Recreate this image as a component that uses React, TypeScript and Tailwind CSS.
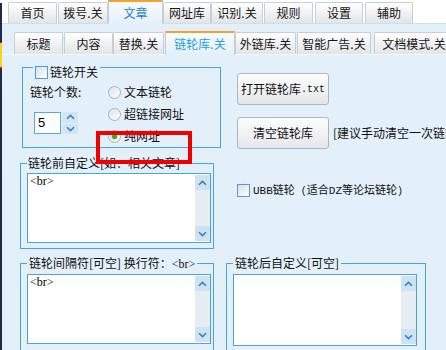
import React from "react";

const SANS = "font-['Noto_Sans_CJK_SC','Liberation_Sans',sans-serif]";
const SERIF = "font-['Liberation_Serif','Noto_Sans_CJK_SC',serif]";
const MONO = "font-['Liberation_Mono',monospace] text-[10px]";
const MONO11 = "font-['Liberation_Mono',monospace] text-[11px]";

function Chevron({ down = false }: { down?: boolean }) {
  return (
    <svg width="9" height="6" viewBox="0 0 9 6">
      <polyline
        points={down ? "1,1.2 4.5,4.6 8,1.2" : "1,4.8 4.5,1.4 8,4.8"}
        fill="none"
        stroke="#2b84d0"
        strokeWidth="1.6"
      />
    </svg>
  );
}

function TextBox({ text, w, h }: { text?: string; w: string; h: string }) {
  return (
    <div className={`flex ${w} ${h} border border-[#4aa3dc] bg-white`}>
      <div className={`flex-1 pl-[2px] text-[12px] leading-[14px] text-black ${SERIF}`}>{text}</div>
      <div className="w-[15px] my-[1px] flex flex-col bg-[#e6eef4]">
        <div className="h-[15px] bg-[#cfe2ef] flex items-center justify-center">
          <Chevron />
        </div>
        <div className="flex-1" />
        <div className="h-[15px] bg-[#cfe2ef] flex items-center justify-center">
          <Chevron down />
        </div>
      </div>
    </div>
  );
}

function Radio({ on = false }: { on?: boolean }) {
  return (
    <span className="w-[13px] h-[13px] shrink-0 rounded-full border border-[#9cb4c6] bg-linear-to-br from-[#dbe3ea] to-[#ffffff] flex items-center justify-center">
      {on && <span className="w-[5px] h-[5px] rounded-full bg-[#38a820] shadow-[0_0_2px_#6fd050]" />}
    </span>
  );
}

function Check() {
  return <span className="w-[13px] h-[13px] shrink-0 border border-[#4a9de0] bg-linear-to-br from-[#d9dfe5] to-[#ffffff]" />;
}

type Tab = { t: string; c: string; active?: boolean };

const topTabs: Tab[] = [
  { t: "首页", c: "ml-[6px] w-[49px]" },
  { t: "拨号.关", c: "ml-[1px] w-[50px]" },
  { t: "文章", c: "w-[55px]", active: true },
  { t: "网址库", c: "w-[48px]" },
  { t: "识别.关", c: "w-[52px]" },
  { t: "规则", c: "ml-[1px] w-[49px]" },
  { t: "设置", c: "ml-[2px] w-[48px]" },
  { t: "辅助", c: "ml-[2px] w-[48px]" },
];

const subTabs: Tab[] = [
  { t: "标题", c: "ml-[12px] w-[49px]" },
  { t: "内容", c: "ml-[1px] w-[49px]" },
  { t: "替换.关", c: "w-[51px]" },
  { t: "链轮库.关", c: "ml-[1px] w-[70px]", active: true },
  { t: "外链库.关", c: "w-[61px]" },
  { t: "智能广告.关", c: "ml-[1px] w-[74px]" },
  { t: "文档模式.关", c: "ml-[3px] w-[80px]" },
];

function TabEl({ tab, small }: { tab: Tab; small?: boolean }) {
  if (tab.active) {
    return (
      <div
        className={`${tab.c} h-[24px] -mb-px shrink-0 border-x border-[#c5cdd5] border-t-2 border-t-[#f2a22e] bg-linear-to-b from-[#f8fbfe] to-[#e3f0fa] flex items-center justify-center text-[12px] ${
          small ? "text-[#23a0e0]" : "text-[#1c80cc]"
        }`}
      >
        {tab.t}
      </div>
    );
  }
  return (
    <div
      className={`${tab.c} ${small ? "h-[22px]" : "h-[21px]"} shrink-0 border border-b-0 border-[#c6ced6] rounded-t-[2px] bg-linear-to-b from-[#ffffff] to-[#e2e4e6] flex items-center justify-center text-[12px] text-[#161616]`}
    >
      {tab.t}
    </div>
  );
}

export default function App() {
  return (
    <div className={`relative w-[446px] h-[350px] overflow-hidden flex bg-[#e3f0fa] ${SANS}`}>
      {/* left edge strip */}
      <div className="w-[2px] shrink-0 flex flex-col">
        <div className="h-[3px] bg-white" />
        <div className="h-[39px] bg-[#1c2a4c]" />
        <div className="h-[1px] bg-[#e01010]" />
        <div className="h-[24px] bg-[#f3d51a]" />
        <div className="h-[2px] bg-[#e01010]" />
        <div className="flex-1 bg-[#1c2a4c]" />
      </div>

      <div className="flex-1 min-w-0 flex flex-col">
        {/* top tabs */}
        <div className="h-[25px] flex items-end border-b border-[#cfe0ec] bg-white">
          {topTabs.map((t) => (
            <TabEl key={t.t} tab={t} />
          ))}
        </div>

        {/* sub tabs */}
        <div className="h-[23px] mt-[8px] flex items-end border-b border-[#f6fafd]">
          {subTabs.map((t) => (
            <TabEl key={t.t} tab={t} small />
          ))}
        </div>

        {/* content */}
        <div className="flex">
          {/* left column */}
          <div className="ml-[18px] w-[201px] shrink-0 flex flex-col">
            <fieldset className="ml-[2px] mt-[5px] w-[199px] min-w-0 border border-[#43a6e3] pb-0">
              <legend className="ml-[10px] px-[2px] h-[14px] text-[12px] leading-[14px]">
                <span className="flex h-[14px] items-center gap-[2px] translate-y-[5px] text-[#111]">
                  <Check />
                  链轮开关
                </span>
              </legend>
              <div className="flex pt-[7px]">
                <div className="ml-[7px] w-[78px] shrink-0 flex flex-col">
                  <div className="h-[22px] flex items-center text-[12px] text-[#111]">链轮个数:</div>
                  <div className="mt-[9px] ml-[4px] flex">
                    <div className="w-[27px] h-[22px] border border-[#5aa7db] bg-white pl-[3px] flex items-center text-[13px] text-black font-['Liberation_Sans',sans-serif]">
                      5
                    </div>
                    <div className="ml-[1px] w-[16px] h-[22px] flex flex-col gap-[1px]">
                      <div className="flex-1 bg-[#d3e5f1] flex items-center justify-center">
                        <Chevron />
                      </div>
                      <div className="flex-1 bg-[#d3e5f1] flex items-center justify-center">
                        <Chevron down />
                      </div>
                    </div>
                  </div>
                </div>
                <div className="flex flex-col">
                  {[
                    { t: "文本链轮", on: false },
                    { t: "超链接网址", on: false },
                    { t: "纯网址", on: true },
                  ].map((r) => (
                    <div key={r.t} className="h-[22px] flex items-center gap-[3px] text-[12px] text-[#111]">
                      <Radio on={r.on} />
                      {r.t}
                    </div>
                  ))}
                </div>
              </div>
            </fieldset>

            <fieldset className="mt-[8px] w-[194px] min-w-0 border border-[#43a6e3] pb-[5px]">
              <legend className="ml-[6px] px-[1px] text-[12px] leading-[14px] text-[#111]">链轮前自定义[如：相关文章]</legend>
              <div className="pt-[3px] pl-[6px]">
                <TextBox text="<br>" w="w-[184px]" h="h-[70px]" />
              </div>
            </fieldset>

            <fieldset className="mt-[7px] w-[194px] min-w-0 border border-[#43a6e3] pb-[10px]">
              <legend className="ml-[6px] px-[2px] text-[12px] leading-[14px] text-[#111] whitespace-nowrap">
                链轮间隔符[可空] 换行符：<span className={SERIF}>&lt;br&gt;</span>
              </legend>
              <div className="pt-[3px] pl-[6px]">
                <TextBox text="<br>" w="w-[184px]" h="h-[70px]" />
              </div>
            </fieldset>
          </div>

          {/* right column */}
          <div className="ml-[5px] w-[220px] shrink-0 flex flex-col">
            <div className="mt-[18px] ml-[11px] w-[92px] h-[32px] border border-[#aab6c1] rounded-[3px] bg-linear-to-b from-[#fdfdfd] to-[#e4e7ea] flex items-center justify-center text-[12px] text-[#111]">
              打开链轮库<span className={MONO}>.txt</span>
            </div>
            <div className="mt-[12px] ml-[11px] flex items-center">
              <div className="w-[92px] h-[32px] shrink-0 border border-[#aab6c1] rounded-[3px] bg-linear-to-b from-[#fdfdfd] to-[#e4e7ea] flex items-center justify-center text-[12px] text-[#111]">
                清空链轮库
              </div>
              <span className="ml-[4px] whitespace-nowrap text-[12px] text-[#111]">[建议手动清空一次链轮库]</span>
            </div>
            <div className="mt-[33px] ml-[11px] h-[16px] flex items-center gap-[3px] whitespace-nowrap text-[11px] text-[#111]">
              <Check />
              <span>
                <span className={MONO11}>UBB</span>链轮<span className={MONO}> (</span>适合<span className={MONO11}>DZ</span>等论坛链轮<span className={MONO}>)</span>
              </span>
            </div>
            <fieldset className="mt-[58px] w-[200px] min-w-0 border border-[#43a6e3] pb-[10px]">
              <legend className="ml-[6px] px-[2px] text-[12px] leading-[14px] text-[#111]">链轮后自定义[可空]</legend>
              <div className="pt-[4px] pl-[6px]">
                <TextBox w="w-[184px]" h="h-[72px]" />
              </div>
            </fieldset>
          </div>
        </div>
      </div>

      {/* red highlight annotation */}
      <div className="absolute left-[96px] top-[131px] w-[96px] h-[33px] border-4 border-[#ee0000]" />
    </div>
  );
}
